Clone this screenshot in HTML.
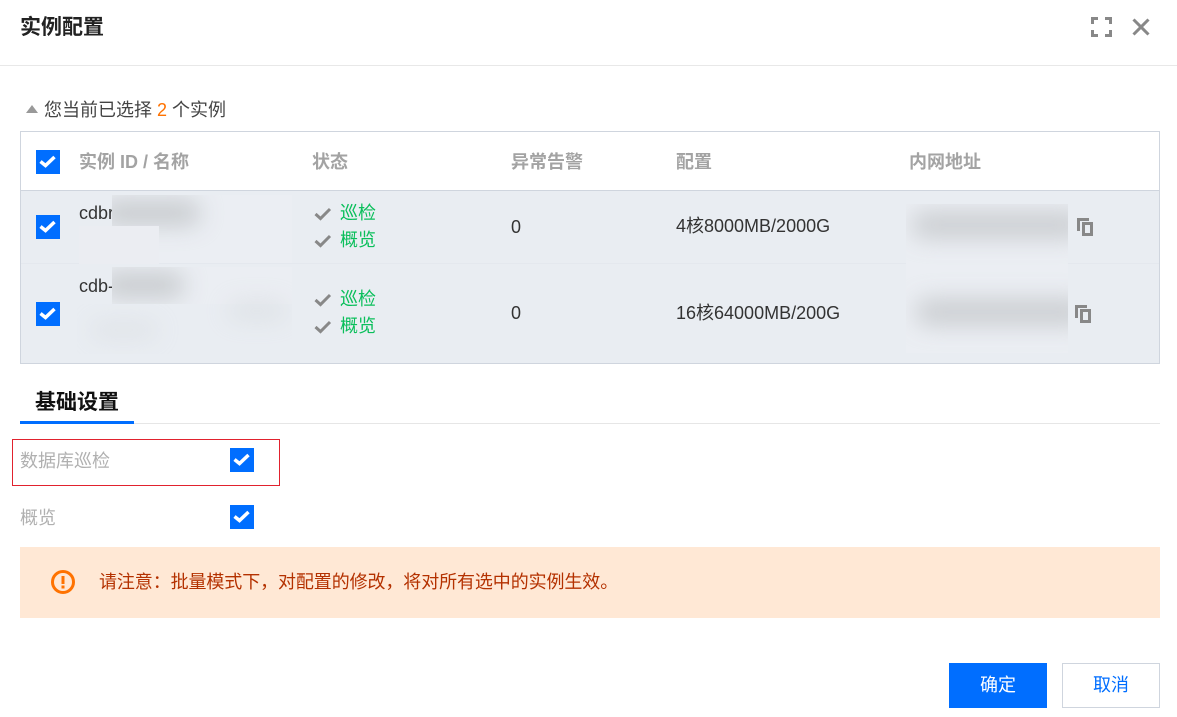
<!DOCTYPE html>
<html><head><meta charset="utf-8">
<style>
html,body{margin:0;padding:0;background:#fff}
body{width:1177px;height:717px;position:relative;overflow:hidden;font-family:"Liberation Sans","Noto Sans CJK SC",sans-serif;font-size:18px;color:#333}
.a{position:absolute;white-space:nowrap}
.t{line-height:24px}
.cb{position:absolute;width:24px;height:24px;background:#006eff}
.cb svg{display:block}
.th{font-weight:bold;color:#a3a3a3;line-height:24px;font-size:18px}
.g{color:#0abf5b;line-height:24px;font-size:18px}
.blur{position:absolute;overflow:hidden;background:#eaeef3}
.blur i{position:absolute;display:block;background:#c2c5c8;filter:blur(12px);border-radius:10px}
</style></head><body>
<div class="a t" style="left:20px;top:16px;font-size:21px;font-weight:bold;color:#222">实例配置</div>
<div class="a" style="left:0;top:65px;width:1177px;height:1px;background:#e8e8e8"></div>

<svg class="a" style="left:1091px;top:17px" width="21" height="20" viewBox="0 0 21 20" fill="none" stroke="#888" stroke-width="3"><path d="M1.500 7V1.500H7M14 1.500H19.500V7M19.500 13V18.500H14M7 18.500H1.500V13"/></svg>
<svg class="a" style="left:1131px;top:17px" width="20" height="20" viewBox="0 0 20 20" fill="none" stroke="#888" stroke-width="3"><path d="M2.500 2.500l15 15M17.500 2.500l-15 15"/></svg>

<svg class="a" style="left:26px;top:105px" width="12" height="8" viewBox="0 0 12 8"><path d="M6 0l6 8H0z" fill="#999"/></svg>
<div class="a t" style="left:44px;top:98px;font-size:18px;color:#444">您当前已选择 <span style="color:#ff7200">2</span> 个实例</div>

<div class="a" style="left:20px;top:131px;width:1138px;height:231px;border:1px solid #cfd5de;background:#fff"></div>
<div class="a" style="left:21px;top:190px;width:1138px;height:1px;background:#cfd5de"></div>
<div class="a" style="left:21px;top:191px;width:1138px;height:172px;background:#e9edf2"></div>
<div class="a" style="left:21px;top:263px;width:1138px;height:1px;background:#e4e8ee"></div>

<div class="cb" style="left:36px;top:150px"><svg width="24" height="24" viewBox="0 0 24 24"><path d="M4.500 11.500L9.500 15.500L18.500 7" fill="none" stroke="#fff" stroke-width="3.500"/></svg></div>
<div class="a th" style="left:79px;top:150px">实例 ID / 名称</div>
<div class="a th" style="left:312px;top:150px">状态</div>
<div class="a th" style="left:511px;top:150px">异常告警</div>
<div class="a th" style="left:676px;top:150px">配置</div>
<div class="a th" style="left:909px;top:150px">内网地址</div>

<div class="cb" style="left:36px;top:215px"><svg width="24" height="24" viewBox="0 0 24 24"><path d="M4.500 11.500L9.500 15.500L18.500 7" fill="none" stroke="#fff" stroke-width="3.500"/></svg></div>
<div class="cb" style="left:36px;top:302px"><svg width="24" height="24" viewBox="0 0 24 24"><path d="M4.500 11.500L9.500 15.500L18.500 7" fill="none" stroke="#fff" stroke-width="3.500"/></svg></div>

<div class="a t" style="left:79px;top:201px;color:#333">cdbr</div>
<div class="a t" style="left:79px;top:274px;color:#333">cdb-</div>

<div class="blur" style="left:112px;top:195px;width:180px;height:68px;background:#ebeef3"><i style="left:-10px;top:6px;width:98px;height:24px;opacity:.9"></i></div>
<div class="blur" style="left:79px;top:226px;width:80px;height:38px;background:#ebedf2"></div>
<div class="blur" style="left:112px;top:267px;width:180px;height:50px;background:#ebeef3"><i style="left:-10px;top:6px;width:82px;height:24px;opacity:.9"></i><i style="left:115px;top:34px;width:60px;height:18px;opacity:.3"></i></div>
<div class="blur" style="left:77px;top:304px;width:215px;height:50px;background:#e9edf2"><i style="left:12px;top:16px;width:70px;height:20px;opacity:.22"></i><i style="left:150px;top:-2px;width:60px;height:18px;opacity:.3"></i></div>

<svg class="a" style="left:314px;top:207px" width="18" height="14" viewBox="0 0 18 14"><path d="M1.500 7l5 4.500L16 2" fill="none" stroke="#888" stroke-width="3"/></svg>
<div class="a g" style="left:340px;top:201px">巡检</div>
<svg class="a" style="left:314px;top:234px" width="18" height="14" viewBox="0 0 18 14"><path d="M1.500 7l5 4.500L16 2" fill="none" stroke="#888" stroke-width="3"/></svg>
<div class="a g" style="left:340px;top:228px">概览</div>
<svg class="a" style="left:314px;top:293px" width="18" height="14" viewBox="0 0 18 14"><path d="M1.500 7l5 4.500L16 2" fill="none" stroke="#888" stroke-width="3"/></svg>
<div class="a g" style="left:340px;top:287px">巡检</div>
<svg class="a" style="left:314px;top:320px" width="18" height="14" viewBox="0 0 18 14"><path d="M1.500 7l5 4.500L16 2" fill="none" stroke="#888" stroke-width="3"/></svg>
<div class="a g" style="left:340px;top:314px">概览</div>

<div class="a t" style="left:511px;top:215px">0</div>
<div class="a t" style="left:511px;top:301px">0</div>
<div class="a t" style="left:676px;top:214px">4核8000MB/2000G</div>
<div class="a t" style="left:676px;top:301px">16核64000MB/200G</div>

<div class="blur" style="left:906px;top:204px;width:162px;height:149px;background:#ebeef3"><i style="left:6px;top:8px;width:172px;height:26px;opacity:.8"></i><i style="left:10px;top:95px;width:172px;height:26px;opacity:.8"></i></div>

<svg class="a" style="left:1077px;top:218px" width="17" height="18" viewBox="0 0 17 18" fill="none" stroke="#888"><path d="M1.500 13V1.500H12" stroke-width="3"/><rect x="6.500" y="5.500" width="8" height="11" stroke-width="3"/></svg>
<svg class="a" style="left:1075px;top:305px" width="17" height="18" viewBox="0 0 17 18" fill="none" stroke="#888"><path d="M1.500 13V1.500H12" stroke-width="3"/><rect x="6.500" y="5.500" width="8" height="11" stroke-width="3"/></svg>

<div class="a t" style="left:35px;top:391px;font-size:21px;font-weight:bold;color:#111">基础设置</div>
<div class="a" style="left:20px;top:423px;width:1140px;height:1px;background:#e6e6e6"></div>
<div class="a" style="left:20px;top:421px;width:114px;height:3px;background:#006eff"></div>

<div class="a" style="left:12px;top:439px;width:266px;height:45px;border:1px solid #e1222e"></div>
<div class="a t" style="left:20px;top:449px;font-size:18px;color:#b0b0b0">数据库巡检</div>
<div class="cb" style="left:230px;top:448px"><svg width="24" height="24" viewBox="0 0 24 24"><path d="M4.500 11.500L9.500 15.500L18.500 7" fill="none" stroke="#fff" stroke-width="3.500"/></svg></div>
<div class="a t" style="left:20px;top:506px;font-size:18px;color:#b0b0b0">概览</div>
<div class="cb" style="left:230px;top:505px"><svg width="24" height="24" viewBox="0 0 24 24"><path d="M4.500 11.500L9.500 15.500L18.500 7" fill="none" stroke="#fff" stroke-width="3.500"/></svg></div>

<div class="a" style="left:20px;top:547px;width:1140px;height:71px;background:#ffe8d5"></div>
<svg class="a" style="left:51px;top:570px" width="24" height="24" viewBox="0 0 24 24"><circle cx="12" cy="12" r="10.500" fill="none" stroke="#ff7200" stroke-width="3"/><rect x="10.500" y="6" width="3" height="8" fill="#ff7200"/><rect x="10.500" y="15.500" width="3" height="3" fill="#ff7200"/></svg>
<div class="a t" style="left:99px;top:570px;font-size:18px;letter-spacing:-.1px;color:#b43100">请注意：批量模式下，对配置的修改，将对所有选中的实例生效。</div>

<div class="a" style="left:949px;top:663px;width:98px;height:45px;background:#006eff;color:#fff;font-size:18px;line-height:44px;text-align:center">确定</div>
<div class="a" style="left:1062px;top:663px;width:96px;height:43px;border:1px solid #cfd5de;color:#006eff;font-size:18px;line-height:43px;text-align:center">取消</div>
</body></html>
